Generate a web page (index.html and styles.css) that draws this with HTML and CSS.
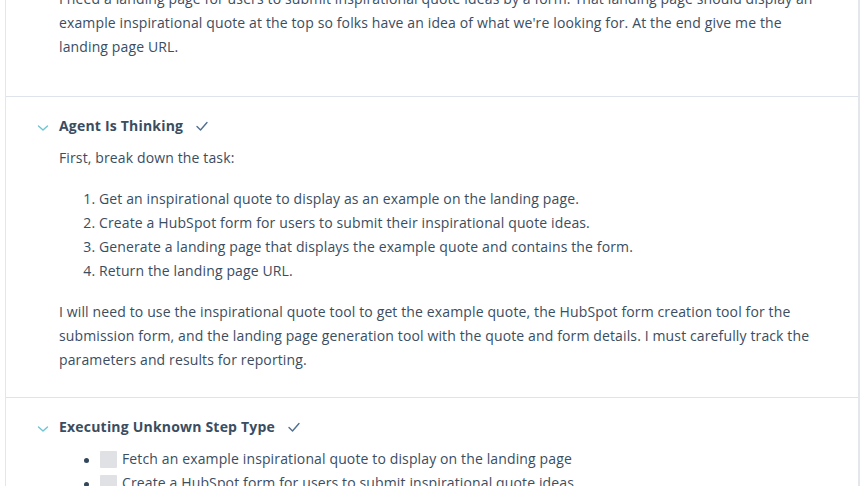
FILE: index.html
```html
<!DOCTYPE html>
<html>
<head>
<meta charset="utf-8">
<link rel="stylesheet" href="styles.css">
</head>
<body>
<div class="log">
  <section class="block message">
    <p>I need a landing page for users to submit inspirational quote ideas by a form. That landing page should display an example inspirational quote at the top so folks have an idea of what we're looking for. At the end give me the landing page URL.</p>
  </section>
  <section class="block step">
    <div class="step-head">
      <svg class="chev" width="12" height="8" viewBox="0 0 12 8"><path d="M1.5 2 L6 6 L10.5 2" fill="none" stroke="#6cc5d3" stroke-width="1.4" stroke-linecap="round" stroke-linejoin="round"/></svg>
      <span class="step-title">Agent Is Thinking</span>
      <svg class="check" width="14" height="12" viewBox="0 0 14 12"><path d="M2 6.5 L5.5 10 L12 2.5" fill="none" stroke="#516f90" stroke-width="1.4" stroke-linecap="round" stroke-linejoin="round"/></svg>
    </div>
    <div class="step-body">
      <p class="lead">First, break down the task:</p>
      <ol class="tasks">
        <li>Get an inspirational quote to display as an example on the landing page.</li>
        <li>Create a HubSpot form for users to submit their inspirational quote ideas.</li>
        <li>Generate a landing page that displays the example quote and contains the form.</li>
        <li>Return the landing page URL.</li>
      </ol>
      <p>I will need to use the inspirational quote tool to get the example quote, the HubSpot form creation tool for the submission form, and the landing page generation tool with the quote and form details. I must carefully track the parameters and results for reporting.</p>
    </div>
  </section>
  <section class="block step">
    <div class="step-head">
      <svg class="chev" width="12" height="8" viewBox="0 0 12 8"><path d="M1.5 2 L6 6 L10.5 2" fill="none" stroke="#6cc5d3" stroke-width="1.4" stroke-linecap="round" stroke-linejoin="round"/></svg>
      <span class="step-title">Executing Unknown Step Type</span>
      <svg class="check" width="14" height="12" viewBox="0 0 14 12"><path d="M2 6.5 L5.5 10 L12 2.5" fill="none" stroke="#516f90" stroke-width="1.4" stroke-linecap="round" stroke-linejoin="round"/></svg>
    </div>
    <div class="step-body">
      <ul class="checks">
        <li><span class="box"></span>Fetch an example inspirational quote to display on the landing page</li>
        <li><span class="box"></span>Create a HubSpot form for users to submit inspirational quote ideas</li>
      </ul>
    </div>
  </section>
</div>
</body>
</html>
```
FILE: styles.css
```css
html, body {
  margin: 0;
  padding: 0;
  background: #ffffff;
  height: 486px;
  overflow: hidden;
}
body {
  font-family: "Open Sans", "Noto Sans", sans-serif;
  font-size: 14px;
  line-height: 24px;
  letter-spacing: 0.13px;
  color: #3a4d61;
}
.log {
  margin-left: 5px;
  width: 852px;
  border-left: 1px solid #e3e6ea;
  border-right: 2px solid #e3e6ea;
  margin-top: -13px;
}
.block {
  border-bottom: 1px solid #dfe3eb;
}
.block:last-child {
  border-bottom: none;
}
p {
  margin: 0;
}
.message {
  padding: 0 40px 37px 53px;
}
.step {
  padding: 17px 40px 25px 31px;
}
.step-head {
  display: flex;
  align-items: center;
  height: 24px;
}
.chev {
  margin-top: 3px;
  margin-right: 10px;
}
.step-title {
  font-weight: 700;
  letter-spacing: 0.2px;
}
.check {
  margin-left: 12px;
}
.step-body {
  padding-left: 22px;
  margin-top: 8px;
}
.lead {
  margin-bottom: 17px;
}
.tasks {
  margin: 0 0 17px 0;
  padding-left: 40px;
}
.tasks li {
  line-height: 24px;
}
.checks {
  margin: 0;
  padding-left: 40px;
  margin-top: 2px;
}
.checks li {
  display: flex;
  align-items: center;
  list-style: none;
  position: relative;
}
.checks li::before {
  content: "";
  position: absolute;
  left: -15px;
  top: 11px;
  width: 5px;
  height: 5px;
  border-radius: 50%;
  background: #33475b;
}
.box {
  width: 17px;
  height: 17px;
  background: #dfe1e4;
  border-radius: 1px;
  margin-left: 1px;
  margin-right: 5px;
}
```
